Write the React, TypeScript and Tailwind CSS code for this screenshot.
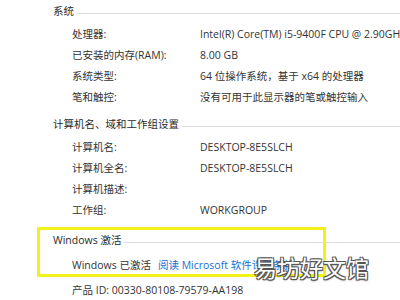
const font = "font-['Segoe_UI','Open_Sans','Noto_Sans_CJK_SC',sans-serif]";

type Row = { label: string; value: string };

const systemRows: Row[] = [
  { label: "处理器:", value: "Intel(R) Core(TM) i5-9400F CPU @ 2.90GHz   2.90 GHz" },
  { label: "已安装的内存(RAM):", value: "8.00 GB" },
  { label: "系统类型:", value: "64 位操作系统，基于 x64 的处理器" },
  { label: "笔和触控:", value: "没有可用于此显示器的笔或触控输入" },
];

const computerRows: Row[] = [
  { label: "计算机名:", value: "DESKTOP-8E5SLCH" },
  { label: "计算机全名:", value: "DESKTOP-8E5SLCH" },
  { label: "计算机描述:", value: "" },
  { label: "工作组:", value: "WORKGROUP" },
];

const Heading = ({ title, className = "" }: { title: string; className?: string }) => (
  <div className={`flex items-center h-[24px] pl-[53px] ${className}`}>
    <span className="shrink-0 text-[#2a2a2a] whitespace-nowrap">{title}</span>
    <div className="flex-1 h-px bg-[#dcdcdc] ml-[3px] mt-[3px]"></div>
  </div>
);

const InfoRow = ({ label, value }: Row) => (
  <div className="flex items-center h-[21px] pl-[72px] whitespace-nowrap">
    <span className="w-[128px] shrink-0 text-[#333]">{label}</span>
    <span className="text-[#333]">{value}</span>
  </div>
);

export default function App() {
  return (
    <div className={`relative w-[400px] h-[300px] overflow-hidden bg-white text-[10.5px] ${font}`}>
      <div className="flex flex-col">
        <Heading title="系统" />
        {systemRows.map((r) => (
          <InfoRow key={r.label} {...r} />
        ))}
        <Heading title="计算机名、域和工作组设置" className="mt-[5px]" />
        {computerRows.map((r) => (
          <InfoRow key={r.label} {...r} />
        ))}
        <Heading title="Windows 激活" className="mt-[8px]" />
        <div className="flex items-center h-[21px] mt-[2px] pl-[72px] whitespace-nowrap">
          <span className="text-[#333]">Windows 已激活</span>
          <span className="ml-[7px] text-[#1a6fd0]">阅读 Microsoft 软件许可条款</span>
        </div>
        <div className="flex items-center h-[21px] pl-[72px] mt-[4px] whitespace-nowrap text-[#333]">
          产品 ID: 00330-80108-79579-AA198
        </div>
      </div>

      {/* highlight box drawn over the screenshot */}
      <div className="absolute left-[37px] top-[227px] w-[289px] h-[50px] border-[3px] border-[#f2f21a]"></div>

      {/* watermark */}
      <div className="absolute left-[254px] top-[256px] text-[23px] leading-none text-white font-['Noto_Sans_CJK_SC',sans-serif] [text-shadow:-1px_-1px_0_#555,1px_-1px_0_#555,-1px_1px_0_#555,1px_1px_0_#555,0_1px_2px_#333]">
        易坊好文馆
      </div>
    </div>
  );
}
